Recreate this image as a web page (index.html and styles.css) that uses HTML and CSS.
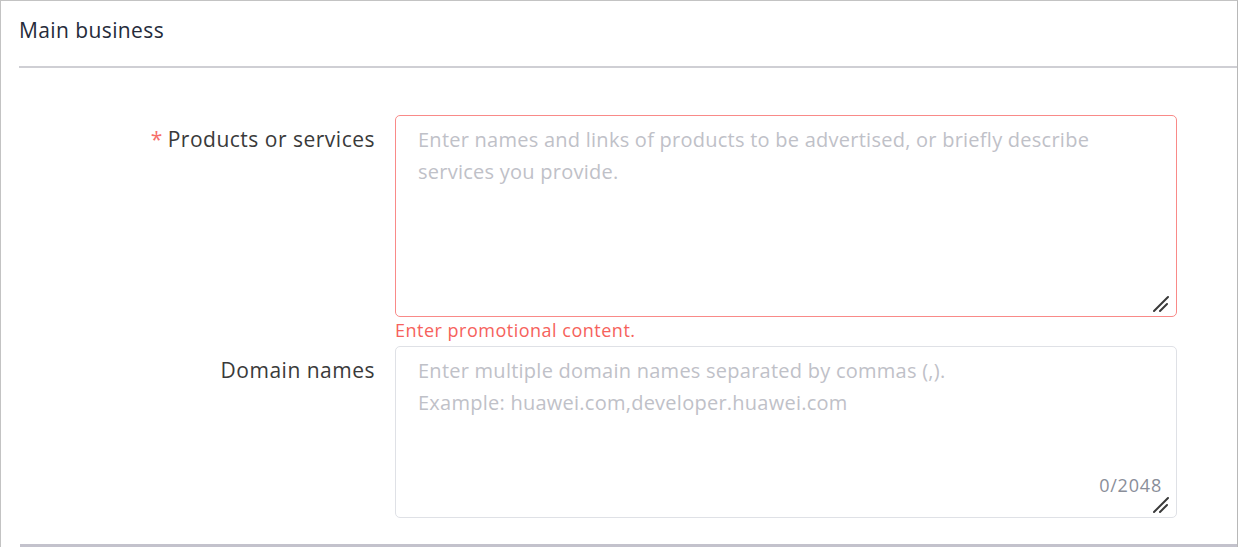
FILE: index.html
```html
<!DOCTYPE html>
<html lang="en">
<head>
<meta charset="utf-8">
<title>Main business</title>
<link rel="stylesheet" href="styles.css">
</head>
<body>
<div class="panel">
  <div class="panel-header">Main business</div>
  <form class="form">
    <div class="row">
      <label class="label" for="products"><span class="req">*</span>Products or services</label>
      <div class="field">
        <div class="wrap">
          <textarea id="products" class="input input-error r1" placeholder="Enter names and links of products to be advertised, or briefly describe services you provide."></textarea>
          <svg class="grip" width="20" height="20" viewBox="0 0 20 20" aria-hidden="true"><path d="M1 16 L15 2 M7 16 L14 9" stroke="#3a3a3a" stroke-width="2" stroke-linecap="round" fill="none"/></svg>
        </div>
        <div class="error">Enter promotional content.</div>
      </div>
    </div>
    <div class="row">
      <label class="label" for="domains">Domain names</label>
      <div class="field">
        <div class="wrap">
          <textarea id="domains" class="input r2" placeholder="Enter multiple domain names separated by commas (,).&#10;Example: huawei.com,developer.huawei.com"></textarea>
          <span class="count">0/2048</span>
          <svg class="grip" width="20" height="20" viewBox="0 0 20 20" aria-hidden="true"><path d="M1 16 L15 2 M7 16 L14 9" stroke="#3a3a3a" stroke-width="2" stroke-linecap="round" fill="none"/></svg>
        </div>
      </div>
    </div>
  </form>
  <div class="panel-foot"></div>
</div>
</body>
</html>
```
FILE: styles.css
```css
html, body {
  margin: 0;
  padding: 0;
  background: #fff;
}
body {
  font-family: "Open Sans", "Noto Sans", sans-serif;
  color: #333;
}
.panel {
  box-sizing: border-box;
  width: 1238px;
  height: 547px;
  border: 1px solid #c3c3c3;
  border-right-color: #b8b8b8;
  border-bottom: none;
  display: flex;
  flex-direction: column;
}
.panel-header {
  box-sizing: border-box;
  margin-left: 18px;
  height: 67px;
  line-height: 58px;
  font-size: 21px;
  letter-spacing: 0.4px;
  color: #252b3a;
  border-bottom: 2px solid #cfcfd4;
}
.form {
  flex: 1;
  padding-top: 47px;
  display: flex;
  flex-direction: column;
  gap: 4px;
}
.row {
  display: flex;
  gap: 20px;
}
.label {
  box-sizing: border-box;
  width: 374px;
  text-align: right;
  font-size: 21px;
  line-height: 32px;
  letter-spacing: 0.5px;
  padding-top: 8px;
  color: #3a3a3a;
}
.req {
  color: #f66f6a;
  margin-right: 5px;
}
.field {
  width: 782px;
  display: flex;
  flex-direction: column;
}
.wrap {
  position: relative;
}
.input {
  display: block;
  box-sizing: border-box;
  width: 782px;
  margin: 0;
  padding: 8px 22px;
  font-family: inherit;
  font-size: 20px;
  line-height: 32px;
  letter-spacing: 0.25px;
  color: #333;
  border: 1px solid #dfe1e6;
  border-radius: 5px;
  outline: none;
  resize: none;
}
.input::placeholder {
  color: #bfc1c8;
}
.input-error {
  border-color: #f98a88;
}
.r1 { height: 202px; }
.r2 { height: 172px; }
.grip {
  position: absolute;
  right: 4px;
  bottom: 2px;
  pointer-events: none;
}
.error {
  font-size: 18px;
  line-height: 24px;
  letter-spacing: 0.5px;
  color: #f6625c;
  margin-top: 1px;
}
.count {
  position: absolute;
  right: 15px;
  bottom: 21px;
  font-size: 18px;
  line-height: 24px;
  letter-spacing: 0.8px;
  color: #8a8e99;
}
.panel-foot {
  margin-left: 19px;
  height: 3px;
  background: #c3c2cc;
}
```
